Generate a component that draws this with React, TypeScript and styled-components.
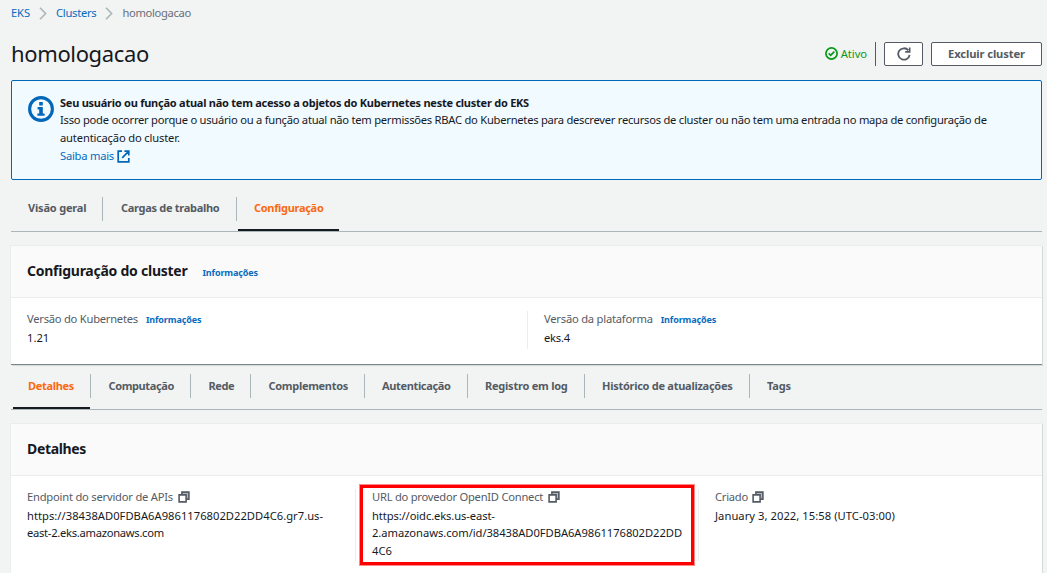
import React from 'react';
import styled, { createGlobalStyle, css } from 'styled-components';

const GlobalStyle = createGlobalStyle`
  * { box-sizing: border-box; }
  body {
    margin: 0;
    height: 573px;
    overflow: hidden;
    background: #f2f3f3;
    color: #16191f;
    font-family: 'Noto Sans', sans-serif;
    font-size: 11.2px;
    letter-spacing: -0.25px;
  }
`;

const Page = styled.main`
  width: 1047px;
  height: 573px;
  overflow: hidden;
  padding: 4px 5px 0 11px;
  display: flex;
  flex-direction: column;
`;

/* Inline run of text; $ls tunes tracking in px */
const Text = styled.span<{ $ls?: number }>`
  letter-spacing: ${(p) => p.$ls ?? -0.25}px;
  white-space: nowrap;
`;

const Breadcrumbs = styled.nav`
  display: flex;
  align-items: center;
  height: 18px;
  flex: none;
`;

const Crumb = styled(Text)<{ $current?: boolean }>`
  color: ${(p) => (p.$current ? '#687078' : '#066bc0')};
  line-height: 18px;
`;

const CrumbArrow = styled.svg`
  width: 8px;
  height: 13px;
  margin: 1px 9px 0 9px;
  flex: none;
`;

const TitleBar = styled.header`
  display: flex;
  align-items: flex-start;
  height: 58px;
  padding-top: 20px;
  flex: none;
`;

const Title = styled.h1`
  margin: -4px auto 0 0;
  font-size: 22px;
  line-height: 30px;
  font-weight: 400;
  letter-spacing: -0.36px;
`;

const Status = styled.div`
  display: flex;
  align-items: center;
  height: 24px;
  padding: 0 8px 2px 0;
  border-right: 1px solid #545b64;
  color: #079a16;
  gap: 3px;

  svg { width: 13px; height: 13px; }
`;

const Button = styled.button<{ $width: number }>`
  display: flex;
  align-items: center;
  justify-content: center;
  width: ${(p) => p.$width}px;
  height: 24px;
  margin-left: 8px;
  padding: 0;
  border: 1px solid #545b64;
  border-radius: 2px;
  background: #fff;
  color: #545b64;
  font: 700 11.2px/20px 'Noto Sans', sans-serif;
  letter-spacing: -0.12px;
`;

const Alert = styled.section`
  display: flex;
  height: 100px;
  flex: none;
  padding: 13px 16px;
  border: 1px solid #0067b9;
  border-radius: 2px;
  background: #f1faff;
`;

const AlertIcon = styled.svg`
  width: 26px;
  height: 26px;
  margin: 2px 6px 0 0;
  flex: none;
`;

const AlertBody = styled.div`
  display: flex;
  flex-direction: column;
  line-height: 18px;
`;

const Strong = styled(Text)`
  font-size: 11px;
  font-weight: 700;
  line-height: 17px;
`;

const MoreLink = styled.a`
  display: flex;
  align-items: center;
  gap: 3px;
  color: #066bc0;

  svg { width: 13px; height: 13px; }
`;

const Tabs = styled.nav<{ $height: number; $offset: number }>`
  display: flex;
  align-items: flex-end;
  height: ${(p) => p.$height}px;
  padding-left: ${(p) => p.$offset}px;
  border-bottom: 1px solid #aab7b8;
  flex: none;
`;

const Tab = styled.div<{ $width: number; $active?: boolean; $pad: number }>`
  width: ${(p) => p.$width}px;
  height: 35px;
  padding-left: ${(p) => p.$pad}px;
  font-size: 11px;
  line-height: 24px;
  font-weight: 700;
  color: ${(p) => (p.$active ? '#fb6a10' : '#545b64')};
  ${(p) => p.$active && css`border-bottom: 2px solid #16191f;`}
`;

const TabDivider = styled.i<{ $gap: number; $rise: number }>`
  width: 1px;
  height: 24px;
  margin: 0 ${(p) => p.$gap}px ${(p) => p.$rise}px 0;
  background: #aab7b8;
`;

const Card = styled.section<{ $height: number }>`
  flex: none;
  height: ${(p) => p.$height}px;
  margin-top: 13px;
  border-top: 1px solid #eaeded;
  border-bottom: 1px solid #7b8788;
  background: #fff;
  box-shadow: 1px 1px 0 #d5dbdb, -1px 0 0 #eaeded;
`;

const CardHeader = styled.header`
  display: flex;
  align-items: baseline;
  gap: 15px;
  height: 52px;
  padding: 15px 16px 0;
  border-bottom: 1px solid #eaeded;
  background: #fafafa;
`;

const CardTitle = styled.h2<{ $ls: number }>`
  margin: 0;
  font-size: 14px;
  line-height: 20px;
  font-weight: 700;
  letter-spacing: ${(p) => p.$ls}px;
`;

const InfoLink = styled.a`
  color: #066bc0;
  font-size: 9px;
  font-weight: 700;
  letter-spacing: -0.12px;
`;

const Columns = styled.div`
  display: flex;
  padding-top: 13px;
`;

const Column = styled.div<{ $width: number; $height: number }>`
  width: ${(p) => p.$width}px;
  height: ${(p) => p.$height}px;
  padding-left: 16px;
  flex: none;

  & + & { border-left: 1px solid #eaeded; }
`;

const Label = styled.div<{ $gap: number }>`
  display: flex;
  align-items: baseline;
  gap: ${(p) => p.$gap}px;
  height: 19px;
  margin-top: -1px;
  line-height: 17px;
  color: #545b64;

  svg { width: 12px; height: 12px; align-self: center; margin-bottom: 1px; }
`;

const Value = styled.div`
  display: flex;
  flex-direction: column;
  line-height: 17.4px;
`;

const Highlight = styled.div`
  position: absolute;
  left: 359px;
  top: 484px;
  width: 336px;
  height: 82px;
  border: 4px solid #f00;
  outline: 1px solid #ff8a8a;
  outline-offset: -1px;
`;

const Chevron = () => (
  <CrumbArrow viewBox="0 0 8 13">
    <path d="M1 .8 6.6 6.5 1 12.2" fill="none" stroke="#aab7b8" strokeWidth="1.6" />
  </CrumbArrow>
);

const CopyIcon = () => (
  <svg viewBox="0 0 12 12" fill="none" stroke="#545b64" strokeWidth="1.6">
    <path d="M4 1.1h7v7H8.4V3.6H4z" fill="#b4b8bd" stroke="none" />
    <path d="M3.9 4V1.1h7v7H8" />
    <path d="M1.1 3.9h7v7h-7z" fill="#fff" />
  </svg>
);

const firstTabs = [
  { label: 'Visão geral', ls: -0.19, width: 91, pad: 17 },
  { label: 'Cargas de trabalho', ls: -0.29, width: 133, pad: 18 },
  { label: 'Configuração', ls: -0.31, width: 101, pad: 16, active: true },
];

const secondTabs = [
  { label: 'Detalhes', ls: -0.31, width: 77, pad: 15, active: true },
  { label: 'Computação', ls: -0.38, width: 99, pad: 17.5 },
  { label: 'Rede', ls: -0.4, width: 59, pad: 17.5 },
  { label: 'Complementos', ls: -0.3, width: 113, pad: 17.5 },
  { label: 'Autenticação', ls: -0.35, width: 102, pad: 17 },
  { label: 'Registro em log', ls: -0.23, width: 116, pad: 17 },
  { label: 'Histórico de atualizações', ls: -0.27, width: 164, pad: 17 },
  { label: 'Tags', ls: -0.13, width: 60, pad: 17 },
];

type TabItem = { label: string; ls: number; width: number; pad: number; active?: boolean };
type TabBarProps = { items: TabItem[]; height: number; offset: number; rise: number };

const TabBar = ({ items, height, offset, rise }: TabBarProps) => (
  <Tabs $height={height} $offset={offset}>
    {items.map((t, i) => (
      <React.Fragment key={t.label}>
        {i > 0 && <TabDivider $gap={t.active ? 1 : 0} $rise={rise} />}
        <Tab $width={t.width} $active={t.active} $pad={t.pad}>
          <Text $ls={t.ls}>{t.label}</Text>
        </Tab>
      </React.Fragment>
    ))}
  </Tabs>
);

export default function App() {
  return (
    <Page>
      <GlobalStyle />
      <Breadcrumbs>
        <Crumb $ls={-0.1}>EKS</Crumb>
        <Chevron />
        <Crumb $ls={-0.27}>Clusters</Crumb>
        <Chevron />
        <Crumb $ls={-0.32} $current>homologacao</Crumb>
      </Breadcrumbs>

      <TitleBar>
        <Title>homologacao</Title>
        <Status>
          <svg viewBox="0 0 13 13" fill="none" stroke="#079a16" strokeWidth="1.7">
            <circle cx="6.5" cy="6.5" r="5.6" />
            <path d="m3.7 6.4 2 2 3.6-3.7" />
          </svg>
          <Text $ls={-0.05}>Ativo</Text>
        </Status>
        <Button $width={39} aria-label="Atualizar">
          <svg width="14" height="14" viewBox="0 0 14 14" fill="none" stroke="#545b64" strokeWidth="1.8">
            <path d="M12.6 7.8A5.7 5.7 0 1 1 11.4 3.4" />
            <path d="M12.7 .4v4.5H8.2" strokeWidth="1.6" />
          </svg>
        </Button>
        <Button $width={111}>Excluir cluster</Button>
      </TitleBar>

      <Alert>
        <AlertIcon viewBox="0 0 26 26">
          <circle cx="13" cy="13" r="11.4" fill="none" stroke="#0067b9" strokeWidth="3.1" />
          <path d="M11.2 6h3.6v3.4h-3.6zM9.6 11h5.2v6.4h1.8v2.4H9.4v-2.4h1.8v-4H9.6z" fill="#0067b9" />
        </AlertIcon>
        <AlertBody>
          <Strong $ls={-0.245}>Seu usuário ou função atual não tem acesso a objetos do Kubernetes neste cluster do EKS</Strong>
          <Text $ls={-0.255}>Isso pode ocorrer porque o usuário ou a função atual não tem permissões RBAC do Kubernetes para descrever recursos de cluster ou não tem uma entrada no mapa de configuração de</Text>
          <Text $ls={-0.16}>autenticação do cluster.</Text>
          <MoreLink>
            <Text $ls={-0.24}>Saiba mais</Text>
            <svg viewBox="0 0 13 13" fill="none" stroke="#0067b9" strokeWidth="1.7">
              <path d="M5 1.2H1.2v10.6h10.6V8M7.4 1.2h4.4v4.4M11.6 1.4 5.2 7.8" />
            </svg>
          </MoreLink>
        </AlertBody>
      </Alert>

      <TabBar items={firstTabs} height={52} offset={0} rise={10} />

      <Card $height={120}>
        <CardHeader>
          <CardTitle $ls={-0.25}>Configuração do cluster</CardTitle>
          <InfoLink>Informações</InfoLink>
        </CardHeader>
        <Columns>
          <Column $width={516} $height={38}>
            <Label $gap={8}>
              <Text $ls={-0.25}>Versão do Kubernetes</Text>
              <InfoLink>Informações</InfoLink>
            </Label>
            <Value><Text $ls={0}>1.21</Text></Value>
          </Column>
          <Column $width={515} $height={38}>
            <Label $gap={8}>
              <Text $ls={-0.22}>Versão da plataforma</Text>
              <InfoLink>Informações</InfoLink>
            </Label>
            <Value><Text $ls={-0.21}>eks.4</Text></Value>
          </Column>
        </Columns>
      </Card>

      <TabBar items={secondTabs} height={45} offset={2} rise={11} />

      <Card $height={200}>
        <CardHeader>
          <CardTitle $ls={-0.34}>Detalhes</CardTitle>
        </CardHeader>
        <Columns>
          <Column $width={344} $height={72}>
            <Label $gap={5}>
              <Text $ls={-0.22}>Endpoint do servidor de APIs</Text>
              <CopyIcon />
            </Label>
            <Value>
              <Text $ls={0.02}>https://38438AD0FDBA6A9861176802D22DD4C6.gr7.us-</Text>
              <Text $ls={-0.28}>east-2.eks.amazonaws.com</Text>
            </Value>
          </Column>
          <Column $width={343} $height={72}>
            <Label $gap={5}>
              <Text $ls={-0.25}>URL do provedor OpenID Connect</Text>
              <CopyIcon />
            </Label>
            <Value>
              <Text $ls={-0.11}>https://oidc.eks.us-east-</Text>
              <Text $ls={-0.05}>2.amazonaws.com/id/38438AD0FDBA6A9861176802D22DD</Text>
              <Text $ls={0}>4C6</Text>
            </Value>
          </Column>
          <Column $width={344} $height={72}>
            <Label $gap={3.5}>
              <Text>Criado</Text>
              <CopyIcon />
            </Label>
            <Value>
              <Text $ls={0.05}>January 3, 2022, 15:58 (UTC-03:00)</Text>
            </Value>
          </Column>
        </Columns>
      </Card>
      <Highlight />
    </Page>
  );
}
